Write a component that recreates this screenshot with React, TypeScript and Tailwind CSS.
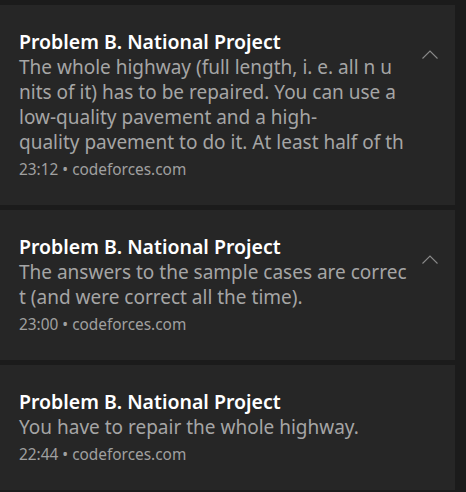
import React from "react";

const Chevron = () => (
  <svg width="16" height="9" viewBox="0 0 16 9" className="block">
    <path d="M0.5 8.5 L8 1 L15.5 8.5" fill="none" stroke="#8a8a8a" strokeWidth="1.1" />
  </svg>
);

type Card = { lines: string[]; meta: string; chevron: boolean };

const cards: Card[] = [
  {
    lines: [
      "The whole highway (full length, i. e. all n u",
      "nits of it) has to be repaired. You can use a",
      "low-quality pavement and a high-",
      "quality pavement to do it. At least half of th",
    ],
    meta: "23:12 • codeforces.com",
    chevron: true,
  },
  {
    lines: [
      "The answers to the sample cases are correc",
      "t (and were correct all the time).",
    ],
    meta: "23:00 • codeforces.com",
    chevron: true,
  },
  {
    lines: ["You have to repair the whole highway."],
    meta: "22:44 • codeforces.com",
    chevron: false,
  },
];

export default function App() {
  return (
    <div
      className="w-[466px] h-[492px] bg-[#1b1b1b] overflow-hidden pt-[5px] flex flex-col gap-[5px]"
      style={{ fontFamily: '"Noto Sans", "Open Sans", sans-serif' }}
    >
      {cards.map((c, i) => (
        <div key={i} className="w-[455px] bg-[#262626] flex pl-[19px] pt-[24px] pb-[24px]">
          <div className="w-[388px]">
            <div className="text-[19.5px] leading-[26px] font-semibold text-white whitespace-nowrap">
              Problem B. National Project
            </div>
            {c.lines.map((l, j) => (
              <div key={j} className="text-[19px] leading-[25px] text-[#a5a5a5] whitespace-nowrap">
                {l}
              </div>
            ))}
            <div className="text-[15.4px] leading-[22px] mt-[4px] text-[#a0a0a0] whitespace-nowrap">
              {c.meta}
            </div>
          </div>
          {c.chevron && (
            <div className="ml-[15px] pt-[21px]">
              <Chevron />
            </div>
          )}
        </div>
      ))}
    </div>
  );
}
